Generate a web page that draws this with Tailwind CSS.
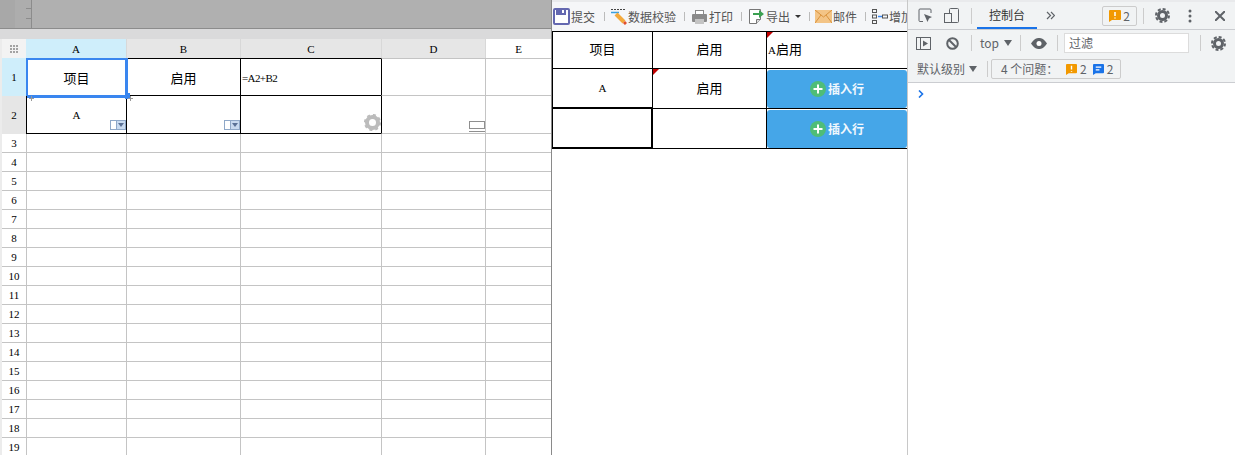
<!DOCTYPE html>
<html lang="zh">
<head>
<meta charset="UTF-8">
<title>Sheet</title>
<script src="https://cdn.jsdelivr.net/npm/@tailwindcss/browser@4"></script>
</head>
<body class="bg-white overflow-hidden font-['Liberation_Serif','Noto_Sans_CJK_SC',serif]">
<div class="flex w-[1235px] h-[455px] overflow-hidden">

  <!-- designer -->
  <div class="w-[552px] h-full shrink-0 flex flex-col overflow-hidden border-r border-[#8a8a8a]">
    <div class="h-[29px] shrink-0 flex bg-[#b0b0b0] border-b border-[#8c8c8c]">
      <div class="w-[15px] h-full bg-[#a8a8a8]"></div>
      <div class="w-[17px] h-full bg-[#adadad] border-r border-[#8c8c8c] flex flex-col items-end gap-[9px] pt-[8px]">
        <div class="w-[5px] h-px bg-[#8c8c8c]"></div>
        <div class="w-[5px] h-px bg-[#8c8c8c]"></div>
      </div>
    </div>
    <div class="h-[10px] shrink-0 bg-[#dadadb]"></div>
    <div class="pl-[2px] flex-1 bg-[#ececec]">
      <div class="grid grid-cols-[24px_100px_114px_141px_104px_66px] text-[11px] leading-none text-black bg-white">
        <div class="h-[19px] bg-[#f3f3f3] flex items-center justify-center">
          <div class="grid grid-cols-3 gap-[1px] opacity-50">
            <i class="w-[2px] h-[2px] bg-[#555]"></i><i class="w-[2px] h-[2px] bg-[#555]"></i><i class="w-[2px] h-[2px] bg-[#555]"></i>
            <i class="w-[2px] h-[2px] bg-[#555]"></i><i class="w-[2px] h-[2px] bg-[#555]"></i><i class="w-[2px] h-[2px] bg-[#555]"></i>
            <i class="w-[2px] h-[2px] bg-[#555]"></i><i class="w-[2px] h-[2px] bg-[#555]"></i><i class="w-[2px] h-[2px] bg-[#555]"></i>
          </div>
        </div>
        <div class="h-[19px] pt-[2px] bg-[#cfeefb] flex items-center justify-center">A</div>
        <div class="h-[19px] pt-[2px] bg-[#e6e6e6] border-l border-[#d8d8d8] flex items-center justify-center">B</div>
        <div class="h-[19px] pt-[2px] bg-[#e6e6e6] border-l border-[#d8d8d8] flex items-center justify-center">C</div>
        <div class="h-[19px] pt-[2px] bg-[#e6e6e6] border-l border-[#d8d8d8] flex items-center justify-center">D</div>
        <div class="h-[19px] pt-[2px] bg-white border-l border-[#d8d8d8] flex items-center justify-center">E</div>

        <!-- row 1 -->
        <div class="h-[38px] pt-px bg-[#cfeefb] flex items-center justify-center">1</div>
        <div class="h-[38px] pt-[3px] relative flex items-center justify-center text-[13px] border border-r-0 border-black">项目
          <div class="absolute -left-px -top-px w-[102px] h-[40px] border-t-2 border-l-2 border-r-[3px] border-b-[3px] border-[#3a86ef]"></div>
          <div class="absolute -right-[4px] -bottom-[4px] w-[5px] h-[6px] bg-[#3a86ef] z-10"></div>
        </div>
        <div class="h-[38px] pt-[3px] flex items-center justify-center text-[13px] border border-r-0 border-black">启用</div>
        <div class="h-[38px] pt-[3px] flex items-center pl-[1px] tracking-[-0.6px] border border-r-0 border-black">=A2+B2</div>
        <div class="h-[38px] border-l border-l-black border-y border-y-[#c4c4c4]"></div>
        <div class="h-[38px] border-l border-y border-[#c4c4c4]"></div>

        <!-- row 2 -->
        <div class="h-[38px] bg-[#e6e6e6] flex items-center justify-center">2</div>
        <div class="h-[38px] pt-px relative flex items-center justify-center border-l border-b border-black">A
          <svg class="absolute left-[2px] top-0 z-20" width="5" height="5" viewBox="0 0 5 5"><path d="M2.500 0v5M0 2.500h5" stroke="#999"/></svg>
          <div class="absolute right-0 bottom-[3px] flex w-[16px] h-[10px] border border-[#8fa8c8] bg-white">
            <div class="w-[6px] bg-white border-r border-[#8fa8c8]"></div>
            <div class="flex-1 bg-[#c8daf0] flex items-center justify-center"><div class="w-0 h-0 border-x-[3px] border-x-transparent border-t-[4px] border-t-[#5a7196]"></div></div>
          </div>
        </div>
        <div class="h-[38px] relative border-l border-b border-black">
          <svg class="absolute left-[1px] top-0 z-20" width="5" height="5" viewBox="0 0 5 5"><path d="M2.500 0v5M0 2.500h5" stroke="#999"/></svg>
          <div class="absolute right-0 bottom-[3px] flex w-[16px] h-[10px] border border-[#8fa8c8] bg-white">
            <div class="w-[6px] bg-white border-r border-[#8fa8c8]"></div>
            <div class="flex-1 bg-[#c8daf0] flex items-center justify-center"><div class="w-0 h-0 border-x-[3px] border-x-transparent border-t-[4px] border-t-[#5a7196]"></div></div>
          </div>
        </div>
        <div class="h-[38px] relative border-l border-b border-black">
          <svg class="absolute right-0 bottom-[2px]" width="17" height="17" viewBox="0 0 17 17"><circle cx="8.500" cy="8.500" r="5.500" fill="none" stroke="#bcbcbc" stroke-width="4"/><circle cx="8.500" cy="8.500" r="7.600" fill="none" stroke="#bcbcbc" stroke-width="2" stroke-dasharray="3 3"/></svg>
        </div>
        <div class="h-[38px] relative border-l border-l-black border-b border-b-[#c4c4c4]">
          <div class="absolute right-0 bottom-[4px] w-[16px] h-[8px] border border-[#8f8f8f]"></div>
          <div class="absolute right-0 bottom-[1px] w-[16px] h-px bg-[#8f8f8f]"></div>
        </div>
        <div class="h-[38px] border-l border-b border-[#c4c4c4]"></div>
      </div>
      <!-- rows 3-19 -->
      <div id="rows" class="bg-white">
        <div class="grid grid-cols-[24px_100px_114px_141px_104px_66px] h-[19px] text-[11px] text-black"><div class="pt-px flex items-center justify-center border-b border-[#c4c4c4]">3</div><div class="border-l border-b border-[#c4c4c4]"></div><div class="border-l border-b border-[#c4c4c4]"></div><div class="border-l border-b border-[#c4c4c4]"></div><div class="border-l border-b border-[#c4c4c4]"></div><div class="border-l border-b border-[#c4c4c4]"></div></div>
      </div>
    </div>
  </div>

  <!-- preview -->
  <div class="w-[355px] h-full shrink-0 flex flex-col overflow-hidden">
    <div class="h-[32px] shrink-0 bg-[#f5f6f8] border-t-2 border-[#e9eaec] border-b border-b-black flex items-center pl-[1px] text-[12px] text-[#555] font-['Noto_Sans_CJK_SC',sans-serif] whitespace-nowrap">
      <svg class="shrink-0" width="17" height="17" viewBox="0 0 17 17"><rect x="1" y="1" width="15" height="15" rx="1" fill="#fff" stroke="#6468b0" stroke-width="2"/><rect x="3" y="1" width="10" height="6" fill="#6468b0"/><rect x="9" y="2" width="2" height="3" fill="#fff"/></svg>
      <span class="ml-[1px]">提交</span><span class="ml-[9px] mr-[5px] w-px h-[9px] shrink-0 bg-[#bbb]"></span>
      <svg class="shrink-0" width="17" height="17" viewBox="0 0 17 17"><path d="M1 1.500h14" stroke="#444" stroke-dasharray="2 1"/><path d="M1 4.500h8" stroke="#3aa0e0" stroke-width="1.500"/><path d="M6 6l8 8" stroke="#f3a93c" stroke-width="4"/><path d="M14 14l2 2" stroke="#e2502c" stroke-width="3"/></svg>
      <span class="ml-[1px]">数据校验</span><span class="ml-[8px] mr-[6px] w-px h-[9px] shrink-0 bg-[#bbb]"></span>
      <svg class="shrink-0" width="17" height="17" viewBox="0 0 17 17"><rect x="4.500" y="2.500" width="8" height="5" fill="#fff" stroke="#8a8a8a"/><rect x="1" y="6" width="15" height="8" rx="1" fill="#8a8a8a"/><rect x="4" y="11" width="9" height="5" fill="#c4c4c4"/></svg>
      <span class="ml-[1px]">打印</span><span class="ml-[8px] mr-[6px] w-px h-[9px] shrink-0 bg-[#bbb]"></span>
      <svg class="shrink-0" width="17" height="17" viewBox="0 0 17 17"><path d="M1.500 1.500h11v10l-4 4h-7z" fill="#fff" stroke="#777"/><path d="M12.500 11.500h-4v4" fill="#ddd" stroke="#777"/><path d="M5 5h6V2l5 4-5 4V7H5z" fill="#3aa050"/></svg>
      <span class="ml-[1px]">导出</span><span class="ml-[5px] w-0 h-0 shrink-0 border-x-[3px] border-x-transparent border-t-[3px] border-t-[#333]"></span><span class="ml-[8px] mr-[5px] w-px h-[9px] shrink-0 bg-[#bbb]"></span>
      <svg class="shrink-0" width="17" height="13" viewBox="0 0 17 13"><rect width="17" height="13" fill="#f3c486"/><path d="M0 0l8.500 7L17 0M0 13l6-8M17 13l-6-8" fill="none" stroke="#d9923c"/></svg>
      <span class="ml-[1px]">邮件</span><span class="ml-[8px] mr-[5px] w-px h-[9px] shrink-0 bg-[#bbb]"></span>
      <svg class="shrink-0" width="17" height="17" viewBox="0 0 17 17" fill="none" stroke="#555"><rect x="1.500" y="1.500" width="4" height="3"/><rect x="1.500" y="7" width="4" height="3"/><rect x="1.500" y="12.500" width="4" height="3"/><path d="M7 8.500h4" stroke="#3a86ef" stroke-width="1.500"/><rect x="11.500" y="7" width="5" height="3"/></svg>
      <span class="ml-[1px]">增加</span>
    </div>
    <div class="grid grid-cols-[101px_114px_140px] text-black">
      <div class="h-[37px] flex items-center justify-center text-[13px] border-b border-x border-black">项目</div>
      <div class="h-[37px] flex items-center justify-center text-[13px] border-b border-r border-black">启用</div>
      <div class="h-[37px] flex items-center pl-[1px] text-[13px] border-b border-black relative"><span class="text-[11px] w-[8px]">A</span>启用<div class="absolute left-0 top-0 w-0 h-0 border-r-[6px] border-r-transparent border-t-[6px] border-t-[#c00000]"></div></div>

      <div class="h-[40px] pt-px flex items-center justify-center text-[11px] border-b-2 border-x border-black">A</div>
      <div class="h-[40px] pt-px flex items-center justify-center text-[13px] border-b border-r border-black relative">启用<div class="absolute left-0 top-0 w-0 h-0 border-r-[6px] border-r-transparent border-t-[6px] border-t-[#c00000]"></div></div>
      <div class="h-[40px] border-b border-black pt-px"><div class="h-full rounded-[3px] bg-[#45a6e8] text-[#f2f8fd] text-[12px] font-bold flex items-center justify-center gap-[2px] font-['Noto_Sans_CJK_SC',sans-serif]"><svg width="16" height="16" viewBox="0 0 16 16"><circle cx="8" cy="8" r="8" fill="#4fbd78"/><path d="M8 3.500v9M3.500 8h9" stroke="#fff" stroke-width="2"/></svg>插入行</div></div>

      <div class="h-[40px] border-b-2 border-r-2 border-l border-black"></div>
      <div class="h-[40px] border-b border-r border-black"></div>
      <div class="h-[40px] border-b border-black pt-px"><div class="h-full rounded-[3px] bg-[#45a6e8] text-[#f2f8fd] text-[12px] font-bold flex items-center justify-center gap-[2px] font-['Noto_Sans_CJK_SC',sans-serif]"><svg width="16" height="16" viewBox="0 0 16 16"><circle cx="8" cy="8" r="8" fill="#4fbd78"/><path d="M8 3.500v9M3.500 8h9" stroke="#fff" stroke-width="2"/></svg>插入行</div></div>
    </div>
  </div>

  <!-- devtools -->
  <div class="flex-1 h-full border-l border-[#c8c8c8] bg-white flex flex-col font-['Noto_Sans_CJK_SC',sans-serif] text-[#5f6368] text-[12px] whitespace-nowrap">
    <div class="h-[30px] shrink-0 bg-[#f1f3f4] border-t-2 border-[#e9eaec] border-b border-b-[#cbcdd1] flex items-center pl-[10px]">
      <svg class="shrink-0" width="15" height="15" viewBox="0 0 15 15"><path d="M5 13.500H2a1 1 0 01-1-1V2a1 1 0 011-1h10a1 1 0 011 1v3" fill="none" stroke="#5f6368"/><path d="M6 6l8 3-3 1.500L9.500 14z" fill="#5f6368"/></svg>
      <svg class="ml-[11px] shrink-0" width="15" height="15" viewBox="0 0 15 15" fill="none" stroke="#5f6368"><rect x="5.500" y="0.500" width="9" height="14" rx="1"/><rect x="0.500" y="5.500" width="7" height="9" fill="#f1f3f4"/></svg>
      <span class="ml-[12px] w-px h-[16px] bg-[#ccc] shrink-0"></span>
      <div class="ml-[5px] w-[60px] h-[27px] shrink-0 flex items-center justify-center border-b-2 border-[#1a73e8] text-[#333]">控制台</div>
      <svg class="ml-[9px] shrink-0" width="9" height="9" viewBox="0 0 9 9" fill="none" stroke="#5f6368" stroke-width="1.200"><path d="M1 1l3.500 3.500L1 8M5 1l3.500 3.500L5 8"/></svg>
      <div class="ml-[47px] w-[35px] h-[20px] shrink-0 border border-[#ccc] rounded-[2px] flex items-center justify-center gap-[2px]"><svg width="12" height="12" viewBox="0 0 12 12"><path d="M0 1a1 1 0 011-1h10a1 1 0 011 1v8a1 1 0 01-1 1H3l-3 2z" fill="#f29900"/><path d="M6 2v4M6 7.500v1" stroke="#fff" stroke-width="1.500"/></svg>2</div>
      <span class="ml-[6px] w-px h-[16px] bg-[#ccc] shrink-0"></span>
      <svg class="ml-[11px] shrink-0" width="15" height="15" viewBox="0 0 15 15"><circle cx="7.500" cy="7.500" r="4" fill="none" stroke="#5f6368" stroke-width="3"/><circle cx="7.500" cy="7.500" r="6.500" fill="none" stroke="#5f6368" stroke-width="2" stroke-dasharray="3 2"/></svg>
      <svg class="ml-[18px] shrink-0" width="4" height="14" viewBox="0 0 4 14" fill="#5f6368"><circle cx="2" cy="2" r="1.500"/><circle cx="2" cy="7" r="1.500"/><circle cx="2" cy="12" r="1.500"/></svg>
      <svg class="ml-[23px] shrink-0" width="10" height="10" viewBox="0 0 10 10"><path d="M0 0l10 10M10 0L0 10" stroke="#5f6368" stroke-width="2"/></svg>
    </div>
    <div class="h-[26px] shrink-0 bg-[#f1f3f4] flex items-center pl-[8px]">
      <svg class="shrink-0" width="15" height="13" viewBox="0 0 15 13"><rect x="0.500" y="0.500" width="14" height="12" fill="none" stroke="#5f6368"/><path d="M4.500 0v13" stroke="#5f6368"/><path d="M7 3.500l5 3-5 3z" fill="#5f6368"/></svg>
      <svg class="ml-[15px] shrink-0" width="13" height="13" viewBox="0 0 13 13" fill="none" stroke="#5f6368" stroke-width="2"><circle cx="6.500" cy="6.500" r="5.300"/><path d="M3 3l7 7"/></svg>
      <span class="ml-[12px] w-px h-[16px] bg-[#ccc] shrink-0"></span>
      <span class="ml-[8px] w-[18px] shrink-0">top</span><span class="ml-[6px] w-0 h-0 shrink-0 border-x-[4px] border-x-transparent border-t-[6px] border-t-[#5f6368]"></span>
      <span class="ml-[8px] w-px h-[16px] bg-[#ccc] shrink-0"></span>
      <svg class="ml-[10px] shrink-0" width="16" height="11" viewBox="0 0 16 11"><path d="M0 5.500C3 1 5.500 0 8 0s5 1 8 5.500C13 10 10.500 11 8 11S3 10 0 5.500z" fill="#5f6368"/><circle cx="8" cy="5.500" r="2.500" fill="#fff"/></svg>
      <span class="ml-[10px] w-px h-[16px] bg-[#ccc] shrink-0"></span>
      <div class="ml-[6px] w-[125px] h-[20px] shrink-0 bg-white border border-[#dcdcdc] flex items-center pl-[4px]">过滤</div>
      <span class="ml-[11px] w-px h-[16px] bg-[#ccc] shrink-0"></span>
      <svg class="ml-[10px] shrink-0" width="15" height="15" viewBox="0 0 15 15"><circle cx="7.500" cy="7.500" r="4" fill="none" stroke="#5f6368" stroke-width="3"/><circle cx="7.500" cy="7.500" r="6.500" fill="none" stroke="#5f6368" stroke-width="2" stroke-dasharray="3 2"/></svg>
    </div>
    <div class="h-[27px] shrink-0 bg-[#f1f3f4] border-b border-[#cbcdd1] flex items-center pl-[9px]">
      <span>默认级别</span><span class="ml-[4px] w-0 h-0 shrink-0 border-x-[4px] border-x-transparent border-t-[6px] border-t-[#5f6368]"></span>
      <span class="ml-[10px] w-px h-[16px] bg-[#ccc] shrink-0"></span>
      <div class="ml-[3px] w-[130px] h-[20px] shrink-0 border border-[#ccc] rounded-[2px] flex items-center pl-[9px]"><span class="w-[65px] shrink-0">4 个问题：</span><svg class="shrink-0" width="11" height="11" viewBox="0 0 12 12"><path d="M0 1a1 1 0 011-1h10a1 1 0 011 1v8a1 1 0 01-1 1H3l-3 2z" fill="#f29900"/><path d="M6 2v4M6 7.500v1" stroke="#fff" stroke-width="1.500"/></svg><span class="ml-[3px]">2</span><svg class="ml-[6px] shrink-0" width="11" height="11" viewBox="0 0 12 12"><path d="M0 1a1 1 0 011-1h10a1 1 0 011 1v8a1 1 0 01-1 1H3l-3 2z" fill="#1a73e8"/><path d="M3 3.500h6M3 6.500h4" stroke="#fff" stroke-width="1.300"/></svg><span class="ml-[3px]">2</span></div>
    </div>
    <div class="pl-[10px] pt-[7px]"><svg width="6" height="8" viewBox="0 0 6 8"><path d="M1 .500l3.500 3.500L1 7.500" fill="none" stroke="#1a73e8" stroke-width="1.600"/></svg></div>
  </div>
</div>
<script>
  // repeat row 3 down to 19
  const rows = document.getElementById("rows");
  const first = rows.firstElementChild;
  for (let i = 4; i <= 19; i++) {
    const r = first.cloneNode(true);
    r.firstElementChild.textContent = i;
    rows.appendChild(r);
  }
</script>
</body>
</html>
